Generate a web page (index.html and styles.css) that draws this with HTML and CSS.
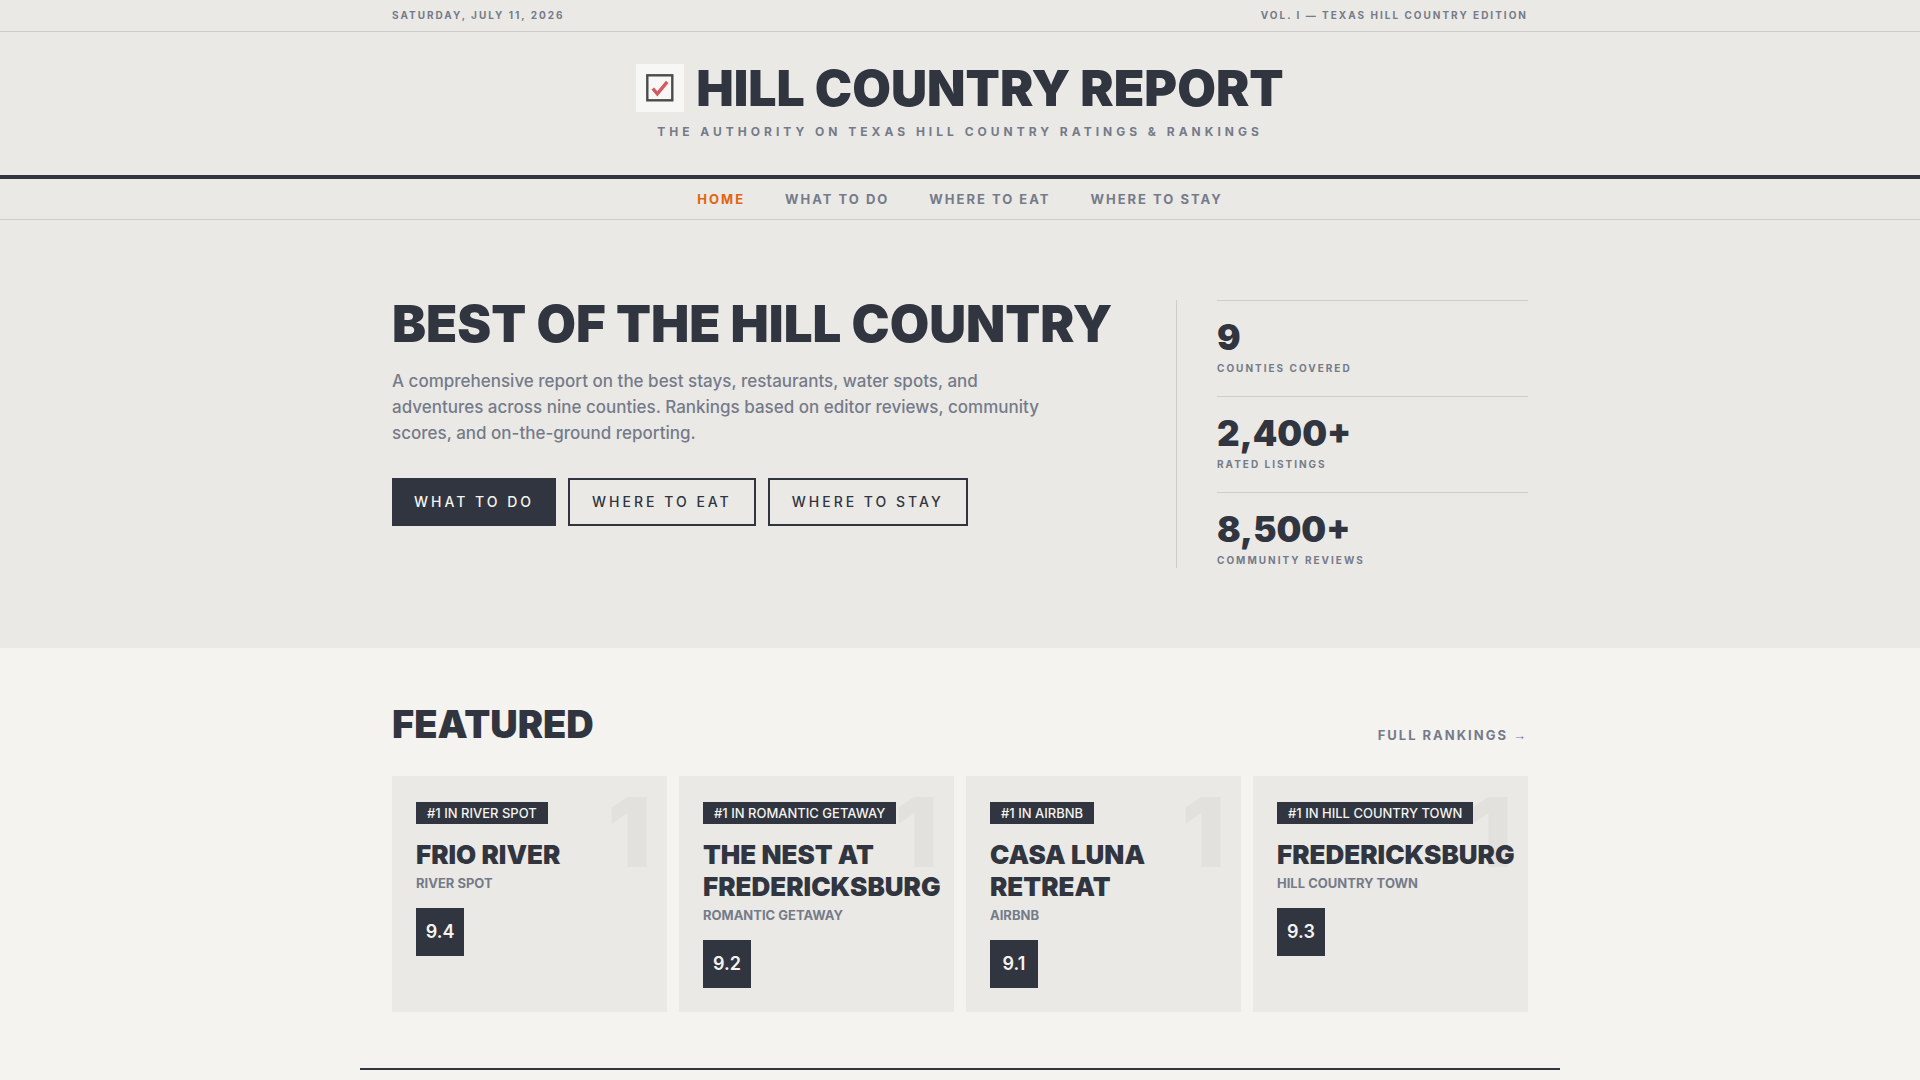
FILE: index.html
```html
<!DOCTYPE html>
<html lang="en">
<head>
<meta charset="utf-8">
<meta name="viewport" content="width=device-width, initial-scale=1">
<title>Hill Country Report</title>
<link rel="stylesheet" href="styles.css">
</head>
<body>
<header class="masthead">
  <div class="topbar">
    <div class="container topbar-row">
      <span>Saturday, July 11, 2026</span>
      <span>Vol. I — Texas Hill Country Edition</span>
    </div>
  </div>
  <div class="brand">
    <a class="brand-link" href="#">
      <svg class="brand-logo" viewBox="0 0 48 48" aria-hidden="true">
        <rect width="48" height="48" fill="#f7f7f5"/>
        <rect x="11.3" y="11.3" width="25" height="25" fill="none" stroke="#4b4c49" stroke-width="2.4"/>
        <path d="M16.800 24.500L21.300 29.800L31.200 17.800" fill="none" stroke="#d35a5f" stroke-width="3.400"/>
      </svg>
      <span class="brand-name">Hill Country Report</span>
    </a>
    <p class="tagline">The Authority on Texas Hill Country Ratings &amp; Rankings</p>
  </div>
  <nav class="nav" aria-label="Main">
    <a class="nav-link is-active" href="#">Home</a>
    <a class="nav-link" href="#">What to Do</a>
    <a class="nav-link" href="#">Where to Eat</a>
    <a class="nav-link" href="#">Where to Stay</a>
  </nav>
</header>
<main>
  <section class="hero">
    <div class="container hero-grid">
      <div class="hero-copy">
        <h1 class="hero-title">Best of the Hill Country</h1>
        <p class="hero-text">A comprehensive report on the best stays, restaurants, water spots, and adventures across nine counties. Rankings based on editor reviews, community scores, and on-the-ground reporting.</p>
        <div class="hero-actions">
          <a class="button button-solid" href="#">What to Do</a>
          <a class="button" href="#">Where to Eat</a>
          <a class="button" href="#">Where to Stay</a>
        </div>
      </div>
      <div class="stats">
        <div class="stat"><div class="stat-value">9</div><div class="stat-label">Counties Covered</div></div>
        <div class="stat"><div class="stat-value">2,400+</div><div class="stat-label">Rated Listings</div></div>
        <div class="stat"><div class="stat-value">8,500+</div><div class="stat-label">Community Reviews</div></div>
      </div>
    </div>
  </section>
  <section class="container featured">
    <div class="section-head">
      <h2 class="section-title">Featured</h2>
      <a class="section-link" href="#">Full Rankings <span class="arrow">→</span></a>
    </div>
    <div class="cards">
      <article class="card">
        <span class="card-rank" aria-hidden="true">1</span>
        <span class="card-tag">#1 in River Spot</span>
        <h3 class="card-title">Frio River</h3>
        <p class="card-type">River Spot</p>
        <div class="score">9.4</div>
      </article>
      <article class="card">
        <span class="card-rank" aria-hidden="true">1</span>
        <span class="card-tag">#1 in Romantic Getaway</span>
        <h3 class="card-title">The Nest at Fredericksburg</h3>
        <p class="card-type">Romantic Getaway</p>
        <div class="score">9.2</div>
      </article>
      <article class="card">
        <span class="card-rank" aria-hidden="true">1</span>
        <span class="card-tag">#1 in Airbnb</span>
        <h3 class="card-title">Casa Luna Retreat</h3>
        <p class="card-type">Airbnb</p>
        <div class="score">9.1</div>
      </article>
      <article class="card">
        <span class="card-rank" aria-hidden="true">1</span>
        <span class="card-tag">#1 in Hill Country Town</span>
        <h3 class="card-title">Fredericksburg</h3>
        <p class="card-type">Hill Country Town</p>
        <div class="score">9.3</div>
      </article>
    </div>
  </section>
  <hr class="rule">
</main>
</body>
</html>
```
FILE: styles.css
```css
:root {
  --ink: #31353f;
  --muted: #757b8a;
  --panel: #eae9e5;
  --page: #f4f3ef;
  --line: #cfcfca;
  --accent: #e2640f;
}

* { box-sizing: border-box; }

body {
  margin: 0;
  background: var(--page);
  color: var(--ink);
  font-family: "Inter", "Noto Sans", sans-serif;
  font-size: 16px;
}

h1, h2, h3, p { margin: 0; }
a { color: inherit; text-decoration: none; }

.container {
  max-width: 1200px;
  margin: 0 auto;
  padding: 0 32px;
}

.masthead { background: var(--panel); }

.topbar { border-bottom: 1px solid var(--line); }

.topbar-row {
  display: flex;
  justify-content: space-between;
  padding-top: 8px;
  padding-bottom: 8px;
  color: var(--muted);
  font-size: 10px;
  font-weight: 700;
  line-height: 15px;
  letter-spacing: 2px;
  text-transform: uppercase;
}

.brand {
  padding: 32px;
  border-bottom: 4px solid var(--ink);
  text-align: center;
}

.brand-link {
  display: flex;
  align-items: center;
  justify-content: center;
  gap: 12px;
}

.brand-logo { width: 48px; height: 48px; }

.brand-name {
  font-size: 50px;
  font-weight: 900;
  line-height: 48px;
  text-transform: uppercase;
}

.tagline {
  margin-top: 8px;
  color: var(--muted);
  font-size: 12px;
  font-weight: 700;
  line-height: 23px;
  letter-spacing: 4px;
  text-transform: uppercase;
}

.nav {
  display: flex;
  flex-wrap: wrap;
  justify-content: center;
  gap: 0 40px;
  border-bottom: 1px solid var(--line);
}

.nav-link {
  padding: 10px 0;
  color: var(--muted);
  font-size: 13px;
  font-weight: 700;
  line-height: 20px;
  letter-spacing: 2px;
  text-transform: uppercase;
}

.nav-link.is-active { color: var(--accent); }

.hero {
  padding: 80px 0;
  background: var(--panel);
}

.hero-grid {
  display: grid;
  grid-template-columns: minmax(0, 1fr) 352px;
  gap: 48px;
}

.hero-title {
  font-size: 51px;
  font-weight: 900;
  line-height: 48px;
  text-transform: uppercase;
}

.hero-text {
  max-width: 672px;
  margin-top: 20px;
  color: var(--muted);
  font-size: 17px;
  font-weight: 500;
  line-height: 26px;
}

.hero-actions {
  display: flex;
  flex-wrap: wrap;
  gap: 12px;
  margin-top: 32px;
}

.button {
  padding: 12px 22px;
  border: 2px solid var(--ink);
  font-size: 14px;
  font-weight: 500;
  line-height: 20px;
  letter-spacing: 3px;
  text-transform: uppercase;
}

.button-solid {
  padding: 12px 20px;
  background: var(--ink);
  color: var(--page);
}

.stats {
  padding-left: 40px;
  border-left: 1px solid var(--line);
}

.stat {
  padding: 18px 0 20px;
  border-top: 1px solid var(--line);
}

.stat:last-child { padding-bottom: 0; }

.stat-value {
  font-size: 35px;
  font-weight: 900;
  line-height: 36px;
}

.stat-label {
  margin-top: 6px;
  color: var(--muted);
  font-size: 10px;
  font-weight: 700;
  line-height: 15px;
  letter-spacing: 2px;
  text-transform: uppercase;
}

.featured {
  padding-top: 56px;
  padding-bottom: 56px;
}

.section-head {
  display: flex;
  align-items: flex-end;
  justify-content: space-between;
  margin-bottom: 32px;
}

.section-title {
  font-size: 38px;
  font-weight: 900;
  line-height: 40px;
  text-transform: uppercase;
}

.section-link {
  color: var(--muted);
  font-size: 13px;
  font-weight: 700;
  line-height: 16px;
  letter-spacing: 2px;
  text-transform: uppercase;
}

.arrow {
  font-family: "Liberation Sans", sans-serif;
  font-weight: 400;
}

.cards {
  display: grid;
  grid-template-columns: repeat(4, minmax(0, 1fr));
  gap: 12px;
}

.card {
  position: relative;
  display: flex;
  flex-direction: column;
  align-items: flex-start;
  padding: 26px 24px 24px;
  background: var(--panel);
}

.card-rank {
  position: absolute;
  top: 8px;
  right: 16px;
  color: #e2e1dd;
  font-size: 96px;
  font-weight: 900;
  line-height: 96px;
}

.card-tag {
  position: relative;
  padding: 0 11px;
  background: var(--ink);
  color: var(--page);
  font-size: 13px;
  font-weight: 500;
  line-height: 22px;
  text-transform: uppercase;
}

.card-title {
  position: relative;
  margin-top: 15px;
  font-size: 26px;
  font-weight: 900;
  line-height: 32px;
  text-transform: uppercase;
}

.card-type {
  margin-top: 4px;
  color: var(--muted);
  font-size: 13px;
  font-weight: 700;
  line-height: 17px;
  text-transform: uppercase;
}

.score {
  width: 48px;
  margin-top: 16px;
  background: var(--ink);
  color: var(--page);
  font-size: 18px;
  font-weight: 600;
  line-height: 48px;
  text-align: center;
}

.rule {
  max-width: 1200px;
  height: 2px;
  margin: 0 auto;
  border: 0;
  background: var(--ink);
}
```
